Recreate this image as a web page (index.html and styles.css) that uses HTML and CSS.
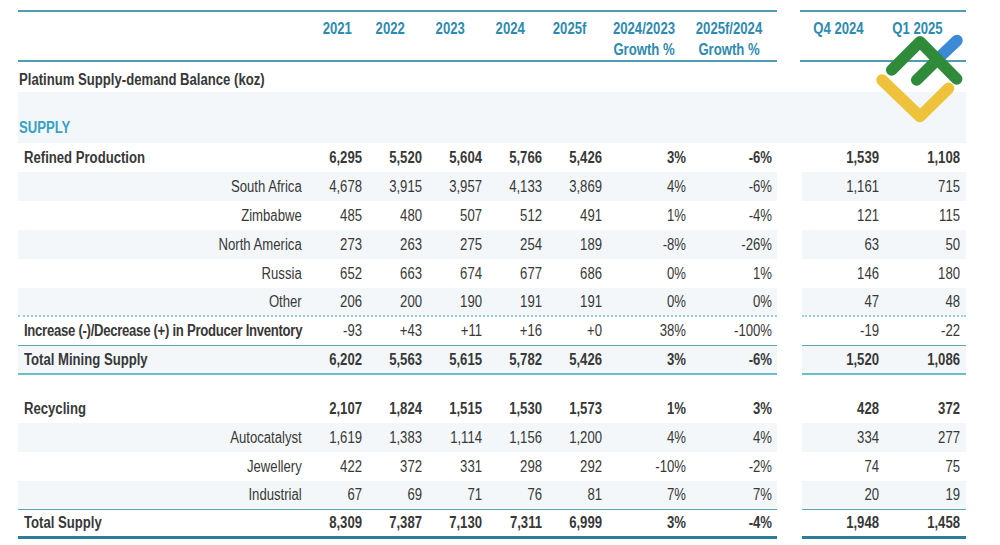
FILE: index.html
```html
<!DOCTYPE html>
<html>
<head>
<meta charset="utf-8">
<link rel="stylesheet" href="styles.css">
</head>
<body>
<div class="page">
  <div class="row head">
    <div class="seg l">
      <div class="c lab"></div>
      <div class="c yr">2021</div>
      <div class="c yr">2022</div>
      <div class="c yr">2023</div>
      <div class="c yr">2024</div>
      <div class="c yr">2025f</div>
      <div class="c gh">2024/2023<br>Growth %</div>
      <div class="c gh">2025f/2024<br>Growth %</div>
      <div class="c"></div>
    </div>
    <div class="seg r">
      <div class="c gh">Q4 2024</div>
      <div class="c gh">Q1 2025</div>
      <div class="c"></div>
    </div>
  </div>

  <div class="title"><span class="t">Platinum Supply-demand Balance (koz)</span></div>
  <div class="band"><span class="t">SUPPLY</span></div>

  <div class="row bold">
    <div class="seg l"><div class="c lab main">Refined Production</div><div class="c">6,295</div><div class="c">5,520</div><div class="c">5,604</div><div class="c">5,766</div><div class="c">5,426</div><div class="c">3%</div><div class="c">-6%</div><div class="c"></div></div>
    <div class="seg r"><div class="c">1,539</div><div class="c">1,108</div><div class="c"></div></div>
  </div>
  <div class="row shade">
    <div class="seg l"><div class="c lab">South Africa</div><div class="c">4,678</div><div class="c">3,915</div><div class="c">3,957</div><div class="c">4,133</div><div class="c">3,869</div><div class="c">4%</div><div class="c">-6%</div><div class="c"></div></div>
    <div class="seg r"><div class="c">1,161</div><div class="c">715</div><div class="c"></div></div>
  </div>
  <div class="row">
    <div class="seg l"><div class="c lab">Zimbabwe</div><div class="c">485</div><div class="c">480</div><div class="c">507</div><div class="c">512</div><div class="c">491</div><div class="c">1%</div><div class="c">-4%</div><div class="c"></div></div>
    <div class="seg r"><div class="c">121</div><div class="c">115</div><div class="c"></div></div>
  </div>
  <div class="row shade">
    <div class="seg l"><div class="c lab">North America</div><div class="c">273</div><div class="c">263</div><div class="c">275</div><div class="c">254</div><div class="c">189</div><div class="c">-8%</div><div class="c">-26%</div><div class="c"></div></div>
    <div class="seg r"><div class="c">63</div><div class="c">50</div><div class="c"></div></div>
  </div>
  <div class="row">
    <div class="seg l"><div class="c lab">Russia</div><div class="c">652</div><div class="c">663</div><div class="c">674</div><div class="c">677</div><div class="c">686</div><div class="c">0%</div><div class="c">1%</div><div class="c"></div></div>
    <div class="seg r"><div class="c">146</div><div class="c">180</div><div class="c"></div></div>
  </div>
  <div class="row shade dotted">
    <div class="seg l"><div class="c lab">Other</div><div class="c">206</div><div class="c">200</div><div class="c">190</div><div class="c">191</div><div class="c">191</div><div class="c">0%</div><div class="c">0%</div><div class="c"></div></div>
    <div class="seg r"><div class="c">47</div><div class="c">48</div><div class="c"></div></div>
  </div>
  <div class="row thin">
    <div class="seg l"><div class="c lab main strong tight">Increase (-)/Decrease (+) in Producer Inventory</div><div class="c">-93</div><div class="c">+43</div><div class="c">+11</div><div class="c">+16</div><div class="c">+0</div><div class="c">38%</div><div class="c">-100%</div><div class="c"></div></div>
    <div class="seg r"><div class="c">-19</div><div class="c">-22</div><div class="c"></div></div>
  </div>
  <div class="row bold shade mid">
    <div class="seg l"><div class="c lab main">Total Mining Supply</div><div class="c">6,202</div><div class="c">5,563</div><div class="c">5,615</div><div class="c">5,782</div><div class="c">5,426</div><div class="c">3%</div><div class="c">-6%</div><div class="c"></div></div>
    <div class="seg r"><div class="c">1,520</div><div class="c">1,086</div><div class="c"></div></div>
  </div>

  <div class="spacer"></div>

  <div class="row bold">
    <div class="seg l"><div class="c lab main">Recycling</div><div class="c">2,107</div><div class="c">1,824</div><div class="c">1,515</div><div class="c">1,530</div><div class="c">1,573</div><div class="c">1%</div><div class="c">3%</div><div class="c"></div></div>
    <div class="seg r"><div class="c">428</div><div class="c">372</div><div class="c"></div></div>
  </div>
  <div class="row shade">
    <div class="seg l"><div class="c lab">Autocatalyst</div><div class="c">1,619</div><div class="c">1,383</div><div class="c">1,114</div><div class="c">1,156</div><div class="c">1,200</div><div class="c">4%</div><div class="c">4%</div><div class="c"></div></div>
    <div class="seg r"><div class="c">334</div><div class="c">277</div><div class="c"></div></div>
  </div>
  <div class="row">
    <div class="seg l"><div class="c lab">Jewellery</div><div class="c">422</div><div class="c">372</div><div class="c">331</div><div class="c">298</div><div class="c">292</div><div class="c">-10%</div><div class="c">-2%</div><div class="c"></div></div>
    <div class="seg r"><div class="c">74</div><div class="c">75</div><div class="c"></div></div>
  </div>
  <div class="row shade thin">
    <div class="seg l"><div class="c lab">Industrial</div><div class="c">67</div><div class="c">69</div><div class="c">71</div><div class="c">76</div><div class="c">81</div><div class="c">7%</div><div class="c">7%</div><div class="c"></div></div>
    <div class="seg r"><div class="c">20</div><div class="c">19</div><div class="c"></div></div>
  </div>
  <div class="row bold total">
    <div class="seg l"><div class="c lab main">Total Supply</div><div class="c">8,309</div><div class="c">7,387</div><div class="c">7,130</div><div class="c">7,311</div><div class="c">6,999</div><div class="c">3%</div><div class="c">-4%</div><div class="c"></div></div>
    <div class="seg r"><div class="c">1,948</div><div class="c">1,458</div><div class="c"></div></div>
  </div>

  <svg class="logo" width="100" height="95" viewBox="870 30 100 95">
    <g fill="none" stroke-linecap="round" stroke-linejoin="round" stroke-width="11.5">
      <path d="M937 59.7 L957 40.5" stroke="#3a8ad6"/>
      <path d="M882 80 L920 116.5 L948.5 88.3" stroke="#eec23a"/>
      <path d="M891.7 70 L920 41.7 L956.7 79" stroke="#2f8a3a"/>
      <path d="M916.7 80 L937.5 59.5" stroke="#2f8a3a"/>
    </g>
  </svg>
</div>
</body>
</html>
```
FILE: styles.css
```css
body {
  margin: 0;
  background: #ffffff;
  font-family: "Liberation Sans", Arial, sans-serif;
  font-size: 16px;
  color: #383838;
}

.page {
  position: relative;
  padding: 10px 0 0 18px;
  width: 948px;
}

.row {
  display: flex;
  gap: 25px;
  height: 29px;
}

.seg {
  display: grid;
  box-sizing: border-box;
  align-items: center;
}

.seg.l {
  width: 759px;
  grid-template-columns: 296px 48px 60px 60px 60px 60px 84px 86px 5px;
}

.seg.r {
  width: 164px;
  grid-template-columns: 77px 81px 6px;
}

/* condensed look: narrow the glyphs horizontally */
.c {
  text-align: right;
  white-space: nowrap;
  line-height: 20px;
  transform: scaleX(0.82);
  transform-origin: right center;
}

.lab {
  padding-right: 15px;
}

.lab.main {
  text-align: left;
  padding-left: 6px;
  padding-right: 0;
  transform-origin: 6px center;
}

.tight {
  letter-spacing: -0.34px;
}

.bold .c,
.strong {
  font-weight: bold;
}

.shade .seg {
  background: #f3f7fa;
}

.dotted .seg {
  border-bottom: 2px dotted #9ccfd6;
}

.thin .seg {
  border-bottom: 1.5px solid #5aa7b2;
}

.mid .seg {
  border-bottom: 2px solid #6cbfc9;
}

.total .seg {
  border-bottom: 3px solid #2c7d99;
}

/* header */
.row.head {
  height: 52px;
}

.head .seg {
  border-top: 2px solid #4f9db2;
  border-bottom: 2px solid #4f9db2;
  align-items: start;
  padding-top: 6px;
}

.head .seg.r {
  width: 166px;
  margin-left: -2px;
}

.head .c {
  font-weight: bold;
  color: #2e8ab0;
  line-height: 21px;
}

.head .yr {
  padding-right: 21px;
}

.head .gh {
  text-align: center;
  transform-origin: center center;
}

.title {
  width: 759px;
  height: 30px;
  box-sizing: border-box;
  padding: 8px 0 0 1px;
  line-height: 20px;
  font-weight: bold;
}

.band {
  width: 948px;
  height: 51px;
  box-sizing: border-box;
  padding: 26px 0 0 1px;
  line-height: 20px;
  font-weight: bold;
  color: #36a1c3;
  background: #f3f7fa;
}

.t {
  display: inline-block;
  white-space: nowrap;
  transform: scaleX(0.82);
  transform-origin: left center;
}

.spacer {
  height: 19px;
}

.logo {
  position: absolute;
  left: 870px;
  top: 30px;
}
```
